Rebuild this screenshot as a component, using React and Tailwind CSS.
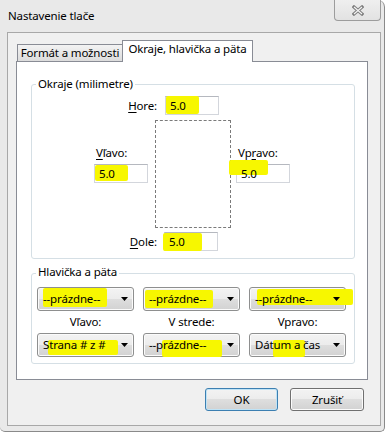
import React from "react";

function Arrow() {
  return (
    <svg width="7" height="4" viewBox="0 0 7 4" className="relative shrink-0">
      <polygon points="0,0 7,0 3.5,4" fill="#000" />
    </svg>
  );
}

function Field({ hl }) {
  return (
    <div className="relative w-[54px] h-[19px] bg-white border border-[#d3d6dc] border-t-[#b5b8bf] flex items-center pl-[4px] shrink-0">
      {hl}
      <span className="relative">5.0</span>
    </div>
  );
}

function Combo({ text, hl }) {
  return (
    <div className="relative w-[97px] h-[24px] rounded-[3px] border border-[#8e8f8f] bg-[linear-gradient(#f3f3f3_0%,#ececec_50%,#dedede_50%,#d2d2d2_100%)] shadow-[inset_0_0_0_1px_#fbfbfb] flex items-center pl-[5px] pr-[5px]">
      {hl}
      <span className="relative flex-1 whitespace-nowrap">{text}</span>
      <Arrow />
    </div>
  );
}

export default function App() {
  return (
    <div className="w-[387px] h-[434px] bg-white font-['Noto_Sans',sans-serif] text-[11.5px] tracking-[-0.15px] leading-[16px] text-black">
      <div className="w-[385px] h-[432px] bg-[#e9e9e9] border-r border-b border-[#8a8a8a] rounded-tr-[7px] rounded-b-[5px] flex flex-col">
        {/* title bar */}
        <div className="h-[32px] flex items-start justify-between shrink-0">
          <div className="pl-[8px] pt-[8px] whitespace-nowrap">Nastavenie tlače</div>
          <div className="mr-[3px] w-[47px] h-[21px] border border-t-0 border-[#9c9c9c] rounded-b-[4px] bg-[linear-gradient(#efefef,#e2e2e2)] flex items-center justify-center">
            <svg width="12" height="11" viewBox="0 0 12 11">
              <path d="M2 2 L10 9 M10 2 L2 9" stroke="#7e7e7e" strokeWidth="3.2" strokeLinecap="square" fill="none" />
              <path d="M2 2 L10 9 M10 2 L2 9" stroke="#f6f6f6" strokeWidth="1.1" fill="none" />
            </svg>
          </div>
        </div>

        {/* client area */}
        <div className="ml-[7px] w-[374px] h-[394px] border border-[#a8a8a8] bg-[#f0f0f0] flex flex-col pt-[7px] pl-[8px]">
          {/* tabs */}
          <div className="flex items-end pl-[1px] h-[21px]">
            <div className="w-[106px] h-[17px] border border-b-0 border-[#898c95] bg-[linear-gradient(#f3f3f3,#dcdcdc)] flex justify-center items-start leading-[15px] whitespace-nowrap">
              Formát a možnosti
            </div>
            <div className="relative z-10 -ml-px -mb-px w-[131px] h-[22px] border border-b-0 border-[#898c95] bg-white flex justify-center items-start leading-[16px] whitespace-nowrap">
              Okraje, hlavička a päta
            </div>
          </div>

          {/* panel */}
          <div className="w-[352px] h-[319px] border border-[#898c95] bg-white flex flex-col pl-[14px] pt-[22px]">
            {/* group 1 */}
            <div className="relative w-[324px] h-[175px] border border-[#d5dfe5] rounded-[3px] flex flex-col pt-[11px]">
              <span className="absolute left-[4px] top-[-9px] bg-white px-[2px] whitespace-nowrap">Okraje (milimetre)</span>
              <div className="flex items-center">
                <div className="w-[133px] text-right pr-[8px]">
                  <span className="underline underline-offset-[2px]">H</span>ore:
                </div>
                <Field hl={<span className="absolute left-0 top-[-1px] w-[33px] h-[18px] bg-[#f7f700] rounded-[2px]" />} />
              </div>
              <div className="flex mt-[5px]">
                <div className="ml-[62px] w-[54px] pt-[25px] flex flex-col">
                  <div className="pl-[2px] h-[16px]">
                    <span className="underline underline-offset-[2px]">V</span>ľavo:
                  </div>
                  <div className="mt-[3px]">
                    <Field hl={<span className="absolute left-0 top-0 w-[33px] h-[16px] bg-[#f7f700] rounded-[2px]" />} />
                  </div>
                </div>
                <div className="ml-[7px] w-[76px] h-[108px] border border-dashed border-[#7a7a7a]" />
                <div className="ml-[5px] w-[54px] pt-[25px] flex flex-col">
                  <div className="pl-[2px] h-[16px]">
                    Vp<span className="underline underline-offset-[2px]">r</span>avo:
                  </div>
                  <div className="mt-[3px]">
                    <Field hl={<span className="absolute left-[-8px] top-[-5px] w-[39px] h-[15px] bg-[#f7f700] rounded-[2px]" />} />
                  </div>
                </div>
              </div>
              <div className="flex items-center mt-[4px]">
                <div className="w-[132px] text-right pr-[7px]">
                  <span className="underline underline-offset-[2px]">D</span>ole:
                </div>
                <Field hl={<span className="absolute left-[-2px] top-0 w-[39px] h-[18px] bg-[#f7f700] rounded-[2px]" />} />
              </div>
            </div>

            {/* group 2 */}
            <div className="relative mt-[14px] w-[324px] h-[91px] border border-[#d5dfe5] rounded-[3px] flex flex-col pt-[13px] pl-[5px]">
              <span className="absolute left-[4px] top-[-10px] bg-white px-[2px] whitespace-nowrap">Hlavička a päta</span>
              <div className="flex gap-[9px]">
                <Combo text="--prázdne--" hl={<span className="absolute left-[5px] top-0 w-[64px] h-[19px] bg-[#f7f700] rounded-[2px]" />} />
                <Combo text="--prázdne--" hl={<span className="absolute left-[1px] top-[2px] w-[68px] h-[18px] bg-[#f7f700] rounded-[2px]" />} />
                <Combo text="--prázdne--" hl={<span className="absolute left-[7px] top-[1px] w-[96px] h-[16px] bg-[#f7f700] rounded-[2px]" />} />
              </div>
              <div className="flex gap-[9px] h-[22px] items-center">
                <div className="w-[97px] text-center">Vľavo:</div>
                <div className="w-[97px] text-center">V strede:</div>
                <div className="w-[97px] text-center">Vpravo:</div>
              </div>
              <div className="flex gap-[9px]">
                <Combo text="Strana # z #" hl={<span className="absolute left-[10px] top-[6px] w-[70px] h-[15px] bg-[#f7f700] rounded-[2px]" />} />
                <Combo text="--prázdne--" hl={<span className="absolute left-[18px] top-[6px] w-[60px] h-[17px] bg-[#f7f700] rounded-[2px]" />} />
                <Combo text="Dátum a čas" hl={<span className="absolute left-[23px] top-[6px] w-[32px] h-[17px] bg-[#f7f700] rounded-[2px]" />} />
              </div>
            </div>
          </div>

          {/* buttons */}
          <div className="flex justify-end gap-[12px] mt-[8px] pr-[16px]">
            <div className="w-[73px] h-[23px] rounded-[3px] border border-[#3c7fb1] bg-[linear-gradient(#f3f3f3_0%,#ececec_50%,#dedede_50%,#d2d2d2_100%)] shadow-[inset_0_0_0_1px_#bfe3f6] flex items-center justify-center">
              OK
            </div>
            <div className="w-[74px] h-[23px] rounded-[3px] border border-[#707070] bg-[linear-gradient(#f3f3f3_0%,#ececec_50%,#dedede_50%,#d2d2d2_100%)] shadow-[inset_0_0_0_1px_#fbfbfb] flex items-center justify-center">
              Zrušiť
            </div>
          </div>
        </div>
      </div>
    </div>
  );
}
